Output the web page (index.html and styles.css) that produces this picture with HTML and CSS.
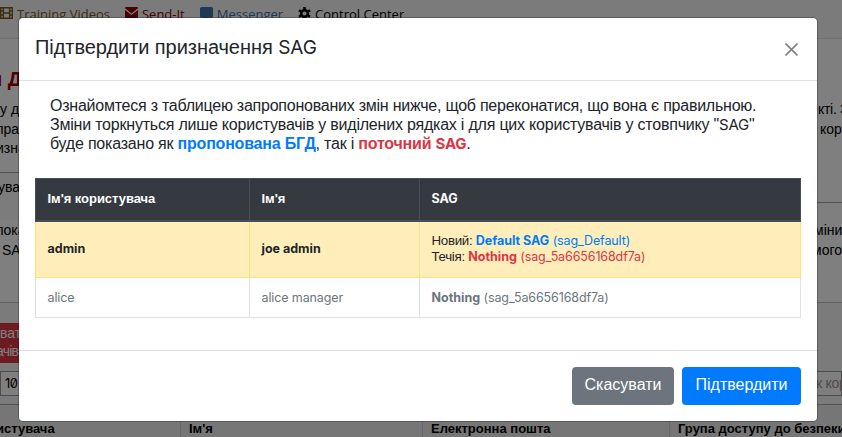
FILE: index.html
```html
<!DOCTYPE html>
<html lang="uk">
<head>
<meta charset="utf-8">
<title>SAG</title>
<link rel="stylesheet" href="styles.css">
</head>
<body>
<div class="page">
  <nav class="nav">
    <a class="videos"><svg width="13" height="12" viewBox="0 0 13 12"><path fill="none" stroke="currentColor" stroke-width="1.4" d="M.7.7h11.6v10.6H.7zM3.4.7v10.6M9.6.7v10.6M3.4 6h6.2M.7 4h2.7M.7 8h2.7M9.6 4h2.7M9.6 8h2.7"/></svg><span>Training Videos</span></a>
    <a class="send"><svg width="13" height="11" viewBox="0 0 13 11"><path fill="currentColor" d="M0 1.2Q0 0 1.2 0h10.6Q13 0 13 1.2L6.5 6.4 0 1.2zM0 2.9l6.5 5 6.5-5v6.9Q13 11 11.8 11H1.2Q0 11 0 9.8z"/></svg><span>Send-It</span></a>
    <a class="messenger"><svg width="13" height="13" viewBox="0 0 13 13"><path fill="currentColor" d="M1.5 0h10Q13 0 13 1.5v7.7q0 1.5-1.5 1.5H7l-4 2.3v-2.3H1.5Q0 10.7 0 9.2V1.5Q0 0 1.5 0z"/></svg><span>Messenger</span></a>
    <a class="control"><svg width="13" height="13" viewBox="0 0 14 14"><path fill="none" stroke="currentColor" stroke-width="2.8" d="M7 0v3M7 11v3M1 3.5l2.5 1.5M10.5 9l2.5 1.5M1 10.5L3.5 9M10.5 5L13 3.5"/><circle cx="7" cy="7" r="3.6" fill="none" stroke="currentColor" stroke-width="2.7"/></svg><span>Control Center</span></a>
  </nav>
  <main class="content">
    <h1>и Д</h1>
    <div class="intro">
      <div class="line"><span class="a">у д</span><span class="b">кті. З</span></div>
      <div class="line"><span>пра</span><span class="c">кор</span></div>
      <div class="line"><span>изна</span></div>
    </div>
    <div class="split">
      <div class="side">ува</div>
      <div class="side right"></div>
    </div>
    <div class="notes">
      <div class="line"><span>пока</span><span class="d">міни</span></div>
      <div class="line"><span class="e">SA</span><span class="f">мого</span></div>
    </div>
    <div class="tools">
      <div class="red"><div>ват</div><div class="second">ачів</div></div>
      <div class="fields"><div class="field count">10</div><div class="field search">к кор</div></div>
    </div>
    <div class="grid-head"><span>истувача</span><span>Ім'я</span><span>Електронна пошта</span><span>Група доступу до безпеки</span></div>
  </main>
</div>
<div class="backdrop">
  <section class="modal">
    <header><h2>Підтвердити призначення <span class="sag">SAG</span></h2><svg width="13" height="13" viewBox="0 0 13 13"><path fill="none" stroke="#808080" stroke-width="1.6" d="M.5.5l12 12M12.5.5l-12 12"/></svg></header>
    <div class="body">
      <p><span class="l1">Ознайомтеся з таблицею запропонованих змін нижче, щоб переконатися, що вона є правильною.</span><br><span class="l2">Зміни торкнуться лише користувачів у виділених рядках і для цих користувачів у стовпчику "<i>SAG</i>"</span><br><span class="l3">буде показано як <b class="blue">пропонована БГД</b>, так і <b class="danger">поточний <i>SAG</i></b>.</span></p>
      <table>
        <colgroup><col class="c1"><col class="c2"><col class="c3"></colgroup>
        <thead><tr><th>Ім'я користувача</th><th>Ім'я</th><th>SAG</th></tr></thead>
        <tbody>
          <tr class="changed"><td><b>admin</b></td><td><b>joe admin</b></td><td><span class="cyr">Новий:</span> <span class="blue"><b>Default SAG</b> (sag_Default)</span><br><span class="cyr">Течія:</span> <span class="danger"><b>Nothing</b> (sag_5a6656168df7a)</span></td></tr>
          <tr class="muted"><td>alice</td><td>alice manager</td><td><b>Nothing</b> (sag_5a6656168df7a)</td></tr>
        </tbody>
      </table>
    </div>
    <footer><button class="cancel">Скасувати</button><button class="confirm">Підтвердити</button></footer>
  </section>
</div>
</body>
</html>
```
FILE: styles.css
```css
* { box-sizing: border-box; }
body { margin: 0; width: 842px; height: 437px; overflow: hidden; position: relative; background: #fff; color: #000; font-family: "Liberation Sans", sans-serif; }
i { font-style: normal; font-family: Inter, sans-serif; font-size: 15px; }
.page { height: 437px; overflow: hidden; }
.nav { display: flex; height: 39px; padding-top: 7px; gap: 15px; background: #f7f7f7; border-bottom: 1px solid #dcdcdc; font: 13px/14px "Open Sans", sans-serif; }
.nav a { display: flex; gap: 4px; align-items: flex-start; white-space: nowrap; }
.nav .videos { color: #7c5a22; }
.send { color: #900000; }
.messenger { color: #3e72a8; }
.content { background: #fff; font-size: 14px; }
h1 { margin: 0 0 0 -10px; height: 61px; padding-top: 28px; font-size: 20px; line-height: 24px; color: #a00000; white-space: nowrap; }
.line { display: flex; justify-content: space-between; height: 19.5px; line-height: 19px; white-space: nowrap; }
.intro { height: 72px; margin-left: -4px; }
.intro .a { margin-left: 4px; }
.c, .d, .f { width: 22px; }
.intro .b { width: 24px; letter-spacing: -.3px; }
.split { display: flex; justify-content: space-between; height: 48px; }
.side { width: 420px; border-top: 1px solid #a5a5a5; background: #f8f8f8; padding-top: 5px; line-height: 19px; text-indent: -2px; }
.side.right { border: 0; height: 31px; border-bottom: 1px solid #a5a5a5; background: #fff; }
.notes { height: 83px; border-bottom: 1px solid #c4c4c4; margin-left: -4px; padding-top: 1px; }
.e { margin-left: 6px; }
.d { width: 28px; }
.f { width: 30px; }
.tools { height: 101px; padding-top: 20px; background: #f6f6f6; }
.red { width: 30px; height: 40px; background: #dc3545; color: #fff; line-height: 18px; padding-top: 1px; }
.second { margin-left: -2px; letter-spacing: -.8px; }
.second { margin-left: -4px; }
.fields { display: flex; justify-content: space-between; margin-top: 8px; }
.field { height: 25px; width: 300px; border: 1px solid #999; background: #fff; padding-left: 4px; line-height: 22px; font-family: Inter, sans-serif; font-size: 13px; font-feature-settings: "zero"; letter-spacing: -.6px; }
.field.search { width: 37px; padding: 0; text-indent: 10px; color: #999; font-family: "Liberation Sans", sans-serif; font-size: 14px; letter-spacing: -.3px; overflow: hidden; white-space: nowrap; }
.grid-head { display: grid; grid-template-columns: 181px 242px 247px 1fr; height: 33px; background: #ececec; border-top: 1px solid #aaa; font: bold 13px/15px "Liberation Sans", sans-serif; white-space: nowrap; }
.grid-head span { border-right: 1px solid #d0d0d0; padding: 16px 0 0 8px; }
.grid-head span:first-child { padding-left: 0; text-indent: -4px; }

.backdrop { position: absolute; inset: 0; background: rgba(0, 0, 0, .5); padding: 18px 0 0 19px; }
.modal { width: 798px; height: 403px; background: #fff; border-radius: 4px; box-shadow: 0 0 0 1px rgba(0, 0, 0, .25); color: #212529; }
.modal header { display: flex; justify-content: space-between; height: 63px; padding: 16px 19px 0 16px; border-bottom: 1px solid #dee2e6; }
h2 { margin: 0; font-size: 20px; font-weight: 400; line-height: 27px; letter-spacing: -.06px; }
h2 .sag { font-family: Inter, sans-serif; font-size: 19px; }
header svg { margin-top: 9px; }
.body { height: 270px; padding: 15px 16px 0; border-bottom: 1px solid #dee2e6; }
p { margin: 0 0 24px; padding-left: 15px; height: 58px; font-size: 16px; line-height: 19px; white-space: nowrap; }
.l1 { letter-spacing: -.24px; }
.l2 { letter-spacing: -.21px; }
.l3 { letter-spacing: -.21px; }
.blue { color: #007bff; }
.danger { color: #dc3545; }
table { width: 766px; table-layout: fixed; border-collapse: collapse; font: 13px/16px Inter, sans-serif; }
.c1 { width: 214px; }
.c2 { width: 170px; }
th { height: 42px; padding: 0 11.5px 2px; text-align: left; color: #fff; background: #343a40; border: 1px solid #454d55; border-bottom-width: 2px; font: bold 13px "Liberation Sans", sans-serif; letter-spacing: -.04px; }
th:last-child { font-family: Inter, sans-serif; font-size: 12.5px; }
td { height: 40px; padding: 0 11.5px; border: 1px solid #dee2e6; font-size: 12.5px; letter-spacing: -.12px; white-space: nowrap; }
td b { letter-spacing: 0; }
.changed td { height: 57px; background: #ffeeba; border-color: #ffdf7e; border-top-color: #454d55; }
.cyr { font: 13.3px/16px "Liberation Sans", sans-serif; letter-spacing: -.3px; }
.muted { color: #6c757d; }
.modal footer { display: flex; justify-content: flex-end; gap: 8px; padding: 16px; }
button { height: 38px; border: 0; border-radius: 4px; color: #fff; font: 16px "Liberation Sans", sans-serif; padding: 0 0 3px; }
.cancel { width: 102px; background: #6c757d; }
.confirm { width: 119px; background: #007bff; }
```
